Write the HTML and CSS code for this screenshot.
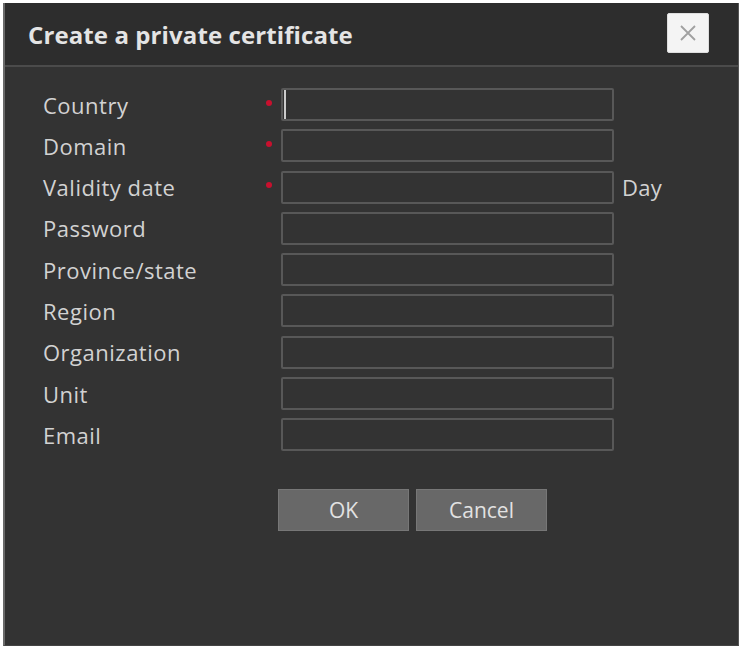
FILE: index.html
```html
<!DOCTYPE html>
<html lang="en">
<head>
    <meta charset="UTF-8">
    <meta name="viewport" content="width=device-width, initial-scale=1.0">
    <title>Create a private certificate</title>
    <link rel="stylesheet" href="styles.css">
</head>
<body>
    <div class="dialog">
        <div class="dialog-header">
            <h1>Create a private certificate</h1>
            <button class="close-btn" title="Close">
                <svg width="18" height="18" viewBox="0 0 18 18">
                    <path d="M2 2 L16 16 M16 2 L2 16" stroke="#a0a0a0" stroke-width="1.8" fill="none"/>
                </svg>
            </button>
        </div>
        <div class="dialog-body">
            <div class="form-grid">
                <label for="country">Country</label>
                <span class="req"></span>
                <div class="field">
                    <input type="text" id="country">
                    <span class="caret"></span>
                </div>
                <span></span>

                <label for="domain">Domain</label>
                <span class="req"></span>
                <div class="field"><input type="text" id="domain"></div>
                <span></span>

                <label for="validity">Validity date</label>
                <span class="req"></span>
                <div class="field"><input type="text" id="validity"></div>
                <span class="unit">Day</span>

                <label for="password">Password</label>
                <span></span>
                <div class="field"><input type="password" id="password"></div>
                <span></span>

                <label for="province">Province/state</label>
                <span></span>
                <div class="field"><input type="text" id="province"></div>
                <span></span>

                <label for="region">Region</label>
                <span></span>
                <div class="field"><input type="text" id="region"></div>
                <span></span>

                <label for="organization">Organization</label>
                <span></span>
                <div class="field"><input type="text" id="organization"></div>
                <span></span>

                <label for="unit">Unit</label>
                <span></span>
                <div class="field"><input type="text" id="unit"></div>
                <span></span>

                <label for="email">Email</label>
                <span></span>
                <div class="field"><input type="text" id="email"></div>
                <span></span>
            </div>
            <div class="actions">
                <button class="btn">OK</button>
                <button class="btn">Cancel</button>
            </div>
        </div>
    </div>
</body>
</html>
```

FILE: styles.css
```css
body {
    margin: 0;
    padding: 0;
    background-color: #fff;
    font-family: "Open Sans", "Noto Sans", sans-serif;
}
.dialog {
    width: 733px;
    height: 642px;
    margin: 3px 0 0 3px;
    background-color: #333;
    border-left: 2px solid #6a6a6a;
    border-right: 1px solid #555;
    border-bottom: 1px solid #444;
    display: flex;
    flex-direction: column;
}
.dialog-header {
    height: 62px;
    background-color: #2d2d2d;
    border-bottom: 2px solid #4b4b4b;
    display: flex;
    align-items: center;
    justify-content: space-between;
    padding: 0 29px 0 23px;
}
.dialog-header h1 {
    margin: 0;
    font-size: 24px;
    font-weight: bold;
    color: #e4e4e4;
    letter-spacing: 0.1px;
}
.close-btn {
    width: 42px;
    height: 40px;
    margin-top: -2px;
    background-color: #f4f4f4;
    border: 1px solid #ddd;
    border-radius: 2px;
    padding: 0;
    display: flex;
    align-items: center;
    justify-content: center;
    cursor: pointer;
}
.dialog-body {
    padding: 21px 0 0 38px;
}
.form-grid {
    display: grid;
    grid-template-columns: 225px 13px 333px auto;
    grid-auto-rows: 33px;
    row-gap: 8.3px;
    align-items: center;
}
.form-grid label {
    font-size: 22px;
    color: #d2d2d2;
    letter-spacing: 0.5px;
}
.req {
    width: 6px;
    height: 6px;
    border-radius: 50%;
    background-color: #c8102e;
    margin: -4px 0 0 -2px;
}
.field {
    position: relative;
    height: 33px;
}
.field input {
    box-sizing: border-box;
    width: 100%;
    height: 33px;
    background-color: #333;
    border: 2px solid #585858;
    border-radius: 2px;
    color: #ddd;
    font-size: 16px;
    padding: 0 6px;
    outline: none;
}
.caret {
    position: absolute;
    left: 3px;
    top: 2px;
    width: 2px;
    height: 27px;
    background-color: #ccc;
    border-top: 2px solid #ccc;
}
.unit {
    font-size: 22px;
    color: #d2d2d2;
    padding-left: 8px;
    letter-spacing: 0.3px;
}
.actions {
    display: flex;
    gap: 7px;
    margin: 38px 0 0 235px;
}
.btn {
    width: 131px;
    height: 42px;
    background-color: #686868;
    border: 1px solid #777;
    color: #e2e2e2;
    font-family: "Open Sans", "Noto Sans", sans-serif;
    font-size: 21px;
    cursor: pointer;
}
.btn:hover {
    background-color: #727272;
}
```
